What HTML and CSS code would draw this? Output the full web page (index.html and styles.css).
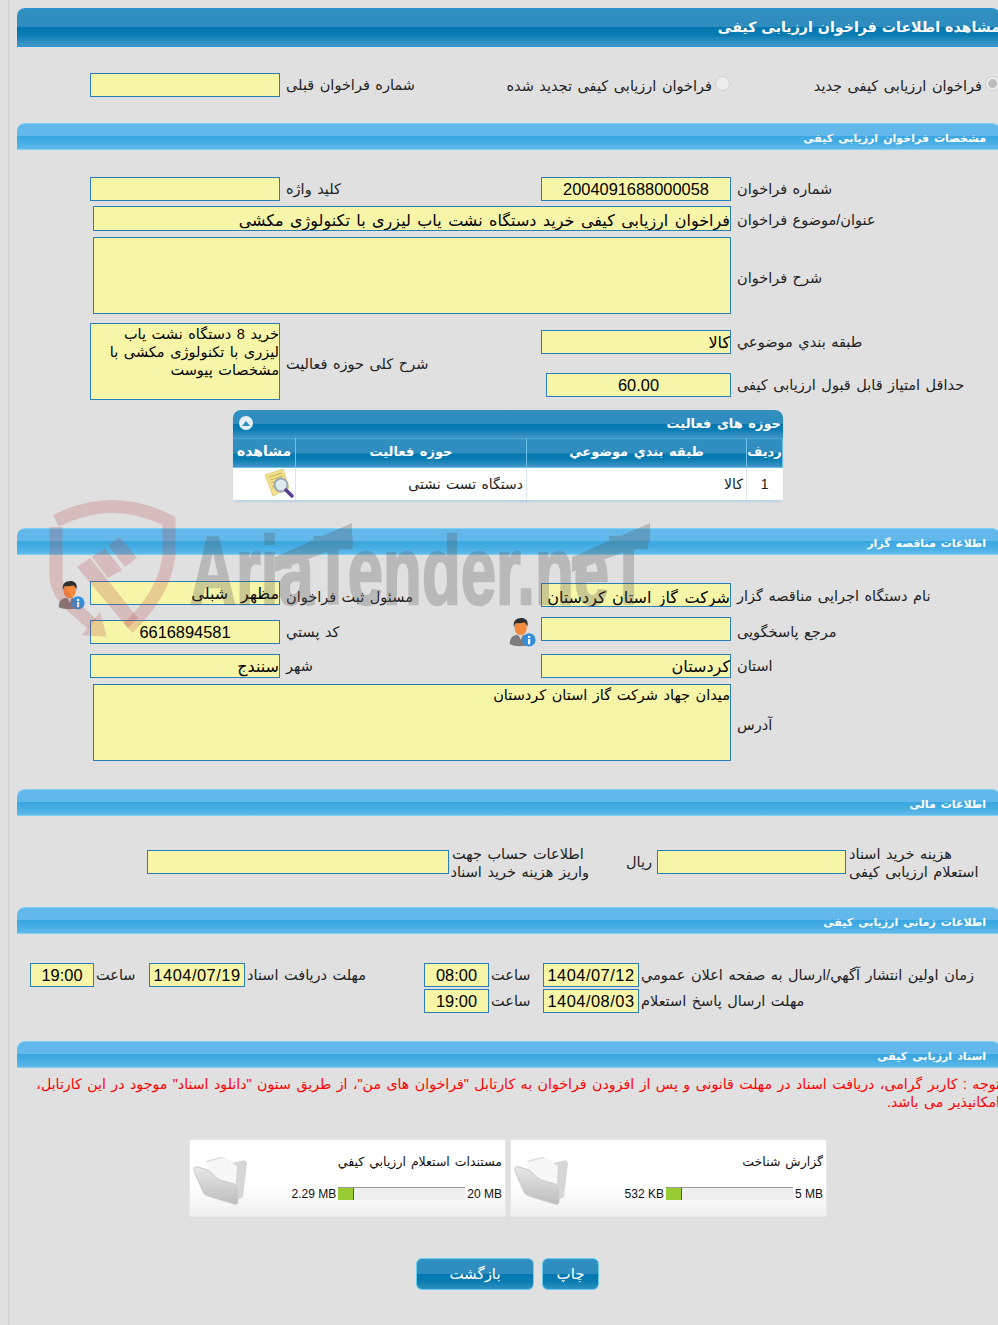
FILE: index.html
```html
<!DOCTYPE html>
<html lang="fa">
<head>
<meta charset="utf-8">
<title>مشاهده اطلاعات فراخوان ارزیابی کیفی</title>
<link rel="stylesheet" href="styles.css">
</head>
<body>
<svg width="0" height="0" class="defs" aria-hidden="true">
  <defs>
    <linearGradient id="folderFront" x1="0" y1="0" x2="0" y2="1"><stop offset="0" stop-color="#e8e8e8"/><stop offset="1" stop-color="#bdbdbd"/></linearGradient>
    <symbol id="person" viewBox="0 0 32 34">
      <path d="M2 31c0-7 3-10 8-11l4 2 4-2c5 1 8 4 8 11-6 3-18 3-24 0z" fill="#7d7d7d"/>
      <path d="M12 20l2.500 6 2.500-6-2.500 1z" fill="#d8d8d8"/>
      <ellipse cx="14.500" cy="12" rx="7" ry="8.500" fill="#f58a3c"/>
      <path d="M7 12C5 4 10 1 15 1s9 3 7 10c-1-3-2-5-4-5-3 1-7 1-9 1-1 1-2 3-2 5z" fill="#2f2f2f"/>
      <circle cx="24" cy="26" r="7.500" fill="#2f8fdc"/>
      <rect x="22.800" y="25" width="2.600" height="6" fill="#fff"/>
      <rect x="22.800" y="21.500" width="2.600" height="2.400" fill="#fff"/>
    </symbol>
    <symbol id="folder" viewBox="0 0 56 50">
      <path d="M13 6l16-4 10 6 13-3 2 3-4 34-8 4z" fill="#d6d6d6"/>
      <path d="M13 7l17-4 14 8-2 30-24-14z" fill="#f7f7f7"/>
      <path d="M1 14c0-2 2-3 4-2l10 3c4 2 7 8 12 10l14 4c2 1 3 3 3 5l1 12c0 3-2 4-4 3l-26-8c-3-1-4-2-5-4L1 16z" fill="url(#folderFront)" stroke="#c8c8c8"/>
    </symbol>
  </defs>
</svg>
<div class="frame">
  <header class="bar bar-main"><h1>مشاهده اطلاعات فراخوان ارزیابی کیفی</h1></header>

  <div class="type-row">
    <label class="radio-cell radio-a"><input type="radio" name="t" checked disabled><span>فراخوان ارزیابی کیفی جدید</span></label>
    <label class="radio-cell radio-b"><input type="radio" name="t" disabled><span>فراخوان ارزیابی کیفی تجدید شده</span></label>
    <div class="lab">شماره فراخوان قبلی</div>
    <div class="field"></div>
  </div>

  <section>
    <h2 class="bar bar-sub">مشخصات فراخوان ارزیابی کیفی</h2>
    <div class="form g-spec">
      <div class="lab c1">شماره فراخوان</div>
      <div class="field num center">2004091688000058</div>
      <div class="lab">کلید واژه</div>
      <div class="field"></div>

      <div class="lab c1 lab-low">عنوان/موضوع فراخوان</div>
      <div class="field wide big tall25">فراخوان ارزیابی کیفی خرید دستگاه نشت یاب لیزری با تکنولوژی مکشی</div>

      <div class="lab lab-77 c1">شرح فراخوان</div>
      <div class="field wide area"></div>

      <div class="lab lab-select c1">طبقه بندي موضوعي</div>
      <div class="field select big">کالا</div>
      <div class="lab lab-span">شرح کلی حوزه فعالیت</div>
      <div class="field area span2">خرید 8 دستگاه نشت یاب لیزری با تکنولوژی مکشی با مشخصات پیوست</div>

      <div class="lab c1">حداقل امتیاز قابل قبول ارزیابی کیفی</div>
      <div class="field num center narrow">60.00</div>
    </div>

    <div class="panel">
      <div class="panel-title">
        <span>حوزه های فعالیت</span>
        <span class="collapse"><svg viewBox="0 0 10 6" width="10" height="6"><path d="M5 0l5 6H0z" fill="#2e8fc0"/></svg></span>
      </div>
      <table class="grid-table">
        <thead>
          <tr><th class="c-a">ردیف</th><th class="c-b">طبقه بندي موضوعي</th><th class="c-c">حوزه فعالیت</th><th class="c-d">مشاهده</th></tr>
        </thead>
        <tbody>
          <tr>
            <td class="td-num">1</td>
            <td>کالا</td>
            <td>دستگاه تست نشتی</td>
            <td class="td-icon">
              <svg viewBox="0 0 32 32" width="32" height="32" class="view-icon">
                <path d="M2 7L20 1l6 19-16 8z" fill="#f4e08a" stroke="#d8c879" stroke-width=".8"/>
                <path d="M6 9l13-4M7 12l13-4M8 15l5-2M9 19l5-2" stroke="#c7b25b" stroke-width="1"/>
                <circle cx="18" cy="17" r="6.500" fill="#dfe9ee" stroke="#9aa9b3" stroke-width="2"/>
                <path d="M23 22l6 6" stroke="#5b3f92" stroke-width="3.500" stroke-linecap="round"/>
              </svg>
            </td>
          </tr>
        </tbody>
      </table>
    </div>
  </section>

  <section class="sec-org">
    <h2 class="bar bar-sub">اطلاعات مناقصه گزار</h2>
    <div class="form g-org">
      <div class="lab push2 c1">نام دستگاه اجرایی مناقصه گزار</div>
      <div class="field big push2">شرکت گاز استان کردستان</div>
      <div class="lab lab-low3">مسئول ثبت فراخوان</div>
      <div class="field big">مظهر&nbsp; شبلی</div>
      <div class="icon-left"><svg class="person"><use href="#person"/></svg></div>

      <div class="lab c1 lab-low2">مرجع پاسخگویی</div>
      <div class="field"></div>
      <div class="lab lab-with-icon"><span class="postal">کد پستي</span><svg class="person"><use href="#person"/></svg></div>
      <div class="field num center push3">6616894581</div>

      <div class="lab c1">استان</div>
      <div class="field big">کردستان</div>
      <div class="lab">شهر</div>
      <div class="field big">سنندج</div>

      <div class="lab lab-77 c1">آدرس</div>
      <div class="field wide area">میدان جهاد شرکت گاز استان کردستان</div>
    </div>
  </section>

  <section class="sec-fin">
    <h2 class="bar bar-sub">اطلاعات مالی</h2>
    <div class="fin-row">
      <div class="lab lab-two w154">هزینه خرید اسناد<br>استعلام ارزیابی کیفی</div>
      <div class="field f189"></div>
      <div class="rial">ریال</div>
      <div class="lab lab-two w140">اطلاعات حساب جهت<br>واریز هزینه خرید اسناد</div>
      <div class="field f302"></div>
    </div>
  </section>

  <section class="sec-time">
    <h2 class="bar bar-sub">اطلاعات زمانی ارزیابی کیفی</h2>
    <div class="form g-time">
      <div class="lab">زمان اولین انتشار آگهي/ارسال به صفحه اعلان عمومي</div>
      <div class="field num center date">1404/07/12</div>
      <div class="lab">ساعت</div>
      <div class="field num center">08:00</div>
      <div class="lab">مهلت دریافت اسناد</div>
      <div class="field num center date">1404/07/19</div>
      <div class="lab">ساعت</div>
      <div class="field num center">19:00</div>

      <div class="lab">مهلت ارسال پاسخ استعلام</div>
      <div class="field num center date">1404/08/03</div>
      <div class="lab">ساعت</div>
      <div class="field num center">19:00</div>
    </div>
  </section>

  <section class="sec-docs">
    <h2 class="bar bar-sub">اسناد ارزیابی کیفی</h2>
    <p class="notice">توجه : کاربر گرامی، دریافت اسناد در مهلت قانونی و پس از افزودن فراخوان به کارتابل "فراخوان های من"، از طریق ستون "دانلود اسناد" موجود در این کارتابل، امکانپذیر می باشد.</p>
    <div class="cards">
      <article class="card">
        <div class="card-main">
          <div class="card-title">گزارش شناخت</div>
          <div class="meter-row">
            <span class="meter-text">5 MB</span>
            <span class="meter"><span class="meter-fill"></span></span>
            <span class="meter-text">532 KB</span>
          </div>
        </div>
        <svg class="folder"><use href="#folder"/></svg>
      </article>
      <article class="card">
        <div class="card-main">
          <div class="card-title">مستندات استعلام ارزيابي کيفي</div>
          <div class="meter-row">
            <span class="meter-text">20 MB</span>
            <span class="meter"><span class="meter-fill"></span></span>
            <span class="meter-text">2.29 MB</span>
          </div>
        </div>
        <svg class="folder"><use href="#folder"/></svg>
      </article>
    </div>
    <div class="actions">
      <button class="btn btn-print" type="button">چاپ</button>
      <button class="btn btn-back" type="button">بازگشت</button>
    </div>
  </section>
</div>

<svg class="watermark" viewBox="0 0 620 150" width="620" height="150" aria-hidden="true">
  <g fill="none" stroke="#b84a4a" stroke-opacity=".24" stroke-width="13">
    <path d="M12 27Q68-2 125 27V62Q120 100 84 134"/>
    <path d="M12 33V85Q14 100 28 112L48 130"/>
  </g>
  <g fill="#b84a4a" fill-opacity=".24">
    <path d="M64 51l12-8 17 21-12 9zM48 63l13-9 17 22-14 8zM33 73l13-9 48 60-10 10z"/>
    <path d="M56 118l7 25-25-2z"/>
  </g>
  <g class="wm-group">
    <path d="M231 63L308 29V48L231 78zM528 63L606 29V48L528 78z"/>
    <text x="146" y="110" class="wm-text" textLength="458" lengthAdjust="spacingAndGlyphs">AriaTender.neT</text>
  </g>
</svg>
</body>
</html>
```

FILE: styles.css
```css
* { box-sizing: border-box; }
html, body { margin: 0; padding: 0; height: 1325px; overflow: hidden; background: #e0e0e0; }
body { position: relative; font-family: "Liberation Sans", "DejaVu Sans", sans-serif; color: #222; }
.defs { position: absolute; }

.frame {
  direction: rtl; word-spacing: 1.5px;
  width: 992px; margin-left: 8px; border-left: 2px solid #d4d4d4; padding: 8px 0 0 7px; height: 1325px;
}

.bar { margin: 0; border-radius: 8px 8px 0 0; color: #fff; font-weight: bold; }
.bar-main {
  height: 39px; padding-top: 8px;
  border-top: 1px solid #2b93dc; border-bottom: 1px solid #2b93dc;
  background: linear-gradient(#2f90c0 0, #2f8cbe 49%, #0377b0 50%, #0a7cb3 70%, #4298c6 100%);
}
.bar-main h1 { margin: 0; font-size: 14.2px; line-height: 20px; font-weight: bold; word-spacing: 1px; }
.bar-sub {
  height: 27px; padding: 5px 14px 0 0; font-size: 11px; line-height: 18px; word-spacing: 2px;
  border-top: 1px solid #7fd0f2; border-bottom: 1px solid #7fd0f2;
  background: linear-gradient(#62b8ea 0, #62b8ea 49%, #3aa7e1 50%, #43ace3 70%, #60b9e9 100%);
}

.lab { font-size: 14.5px; line-height: 24px; height: 24px; text-align: left; padding-left: 6px; color: #222; white-space: nowrap; }
.lab-low { line-height: 28px; }
.lab-low2 { line-height: 30px; }
.lab-low3 { line-height: 32px; }
.field {
  height: 24px; border: 1px solid #2a7eb8; background: #f6f5a8; color: #000;
  font-size: 14.5px; line-height: 22px; overflow: hidden;
}
.num { font-size: 16.4px; }
.date { letter-spacing: .5px; }
.center { text-align: center; }
.big { font-size: 16px; line-height: 24px; white-space: nowrap; word-spacing: 2px; }

.type-row { display: grid; grid-template-columns: 270px 270px 180px 190px; height: 76px; padding-top: 26px; align-items: start; }
.radio-cell { font-size: 14.5px; line-height: 26px; display: flex; align-items: flex-start; white-space: nowrap; }
.radio-cell input {
  appearance: none; width: 15px; height: 15px; margin: 3px 0 0 3px; border-radius: 50%; flex: none;
  border: 1px solid #d0d0d0; background: #ededed;
}
.radio-cell input:checked { background: radial-gradient(circle, #bdbdbd 0 4px, #ededed 5px); }

.form { display: grid; grid-template-columns: 269px 190px 261px 190px 60px; align-items: start; }
.c1 { grid-column: 1; }
.g-spec { grid-template-rows: 29px 31px 86px 50px 37px; padding-top: 27px; }
.wide { grid-column: 2 / 5; margin-left: 3px; }
.tall25 { height: 25px; line-height: 27px; }
.area { height: 77px; line-height: 18px; white-space: normal; padding: 1px 0 0 0; font-size: 14.5px; word-spacing: 1.5px; }
.lab-77 { line-height: 82px; height: 77px; }
.select { margin-top: 7px; }
.lab-select { margin-top: 7px; }
.lab-span { grid-row: span 2; height: 77px; line-height: 82px; }
.span2 { grid-row: span 2; }
.narrow { width: 185px; justify-self: start; }

.panel { width: 550px; margin: 0 217px 0 0; border-radius: 8px 8px 4px 4px; overflow: hidden; box-shadow: 0 1px 2px #b9cfe0; background: #fff; }
.panel-title {
  height: 28px; display: flex; justify-content: space-between; align-items: center; padding: 0 2px 2px 6px;
  color: #fff; font-size: 13px; font-weight: bold; word-spacing: 2px;
  background: linear-gradient(#2f90c0 0, #2f8cbe 49%, #0377b0 50%, #0a7cb3 70%, #4298c6 100%);
}
.collapse { width: 14px; height: 14px; border-radius: 50%; background: #e6eff5; display: flex; align-items: center; justify-content: center; }
.collapse svg { width: 8px; height: 5px; }
.grid-table { width: 100%; border-collapse: collapse; table-layout: fixed; }
.grid-table th {
  height: 29px; color: #fff; font-size: 13px; font-weight: bold; padding: 0 0 4px; text-align: center; word-spacing: 2px;
  border: 1px solid #6cc3ee; border-top: 1px solid #4aa3d6;
  background: linear-gradient(#2f90c0 0, #2f8cbe 49%, #0377b0 50%, #0a7cb3 70%, #4298c6 100%);
}
.c-a { width: 36px; } .c-b { width: 220px; } .c-c { width: 231px; }
.grid-table .c-d { width: 63px; font-size: 14px; }
.grid-table td { height: 32px; font-size: 14px; text-align: right; padding: 0 3px; color: #222; border-left: 1px solid #dbe6ee; border-bottom: 1px solid #bcd3e3; background: #fff; }
.grid-table .td-num { text-align: center; font-size: 14px; }
.grid-table .td-icon { padding: 0; }
.view-icon { display: block; margin: 0 0 0 28px; }

.sec-org { margin-top: 27px; }
.g-org { grid-template-rows: 36px 37px 30px 77px; padding-top: 26px; }
.g-org .push2 { margin-top: 2px; line-height: 27px; }
.g-org .push3 { margin-top: 3px; }
.icon-left { padding-right: 5px; margin-top: -2px; }
.person { width: 28px; height: 32px; display: block; }
.lab-with-icon { display: flex; justify-content: space-between; align-items: flex-start; flex-direction: row-reverse; overflow: visible; }
.lab-with-icon .person { margin: -1px 5px 0 0; }
.postal { padding-top: 3px; }

.sec-fin { margin-top: 28px; }
.fin-row { display: flex; align-items: flex-start; padding-top: 34px; height: 91px; }
.lab-two { line-height: 18px; height: 36px; padding-left: 3px; margin-top: -5px; }
.w154 { width: 154px; }
.w140 { width: 140px; }
.f189 { width: 189px; }
.f302 { width: 302px; }
.rial { width: 68px; font-size: 14.5px; line-height: 24px; padding-right: 5px; color: #222; }

.g-time { grid-template-columns: 361px 96px 54px 65px 179px 96px 55px 64px; grid-template-rows: 26px 25px; padding-top: 29px; }
.g-time .lab { padding-left: 2px; }
.sec-time { height: 134px; }

.notice { margin: 7px 0 0 0; color: #f00; font-size: 14.2px; line-height: 18px; }
.cards { display: flex; gap: 4px; margin: 28px 173px 0 0; }
.card {
  width: 317px; height: 78px; display: flex; padding: 0 3px 0 0; gap: 4px;
  background: linear-gradient(#fff 0, #fff 60%, #efefef 100%); border: 1px solid #e8e8e8;
}
.card-main { flex: 1; padding-top: 12px; }
.card-title { font-size: 12.5px; line-height: 20px; color: #111; }
.meter-row { display: flex; align-items: flex-start; margin-top: 15px; font-size: 12px; line-height: 14px; color: #111; }
.meter-text { white-space: nowrap; direction: ltr; word-spacing: 0; }
.meter { width: 127px; height: 13px; background: #eee; border-top: 1px solid #999; display: flex; direction: ltr; margin: 0 2px; }
.meter-fill { display: block; width: 16px; height: 12px; background: #99cc33; border-right: 1px solid #555; }
.folder { width: 56px; height: 50px; margin: 15px 0 0 3px; flex: none; filter: blur(.4px); }

.actions { display: flex; gap: 8px; margin: 41px 401px 0 0; }
.btn {
  height: 32px; padding: 0; color: #fff; font-family: inherit; font-size: 15px;
  border: 1px solid #6ccdf0; border-radius: 6px;
  background: linear-gradient(#2f90c0 0, #2f8cbe 49%, #0377b0 50%, #0a7cb3 75%, #2f90c0 100%);
}
.btn-print { width: 57px; }
.btn-back { width: 118px; }

.watermark { position: absolute; left: 44px; top: 494px; pointer-events: none; }
.wm-group { opacity: .27; fill: #555; }
.wm-text { font-family: "Liberation Sans", sans-serif; font-weight: bold; font-size: 96px; stroke: #555; stroke-width: 2.5px; }
```
